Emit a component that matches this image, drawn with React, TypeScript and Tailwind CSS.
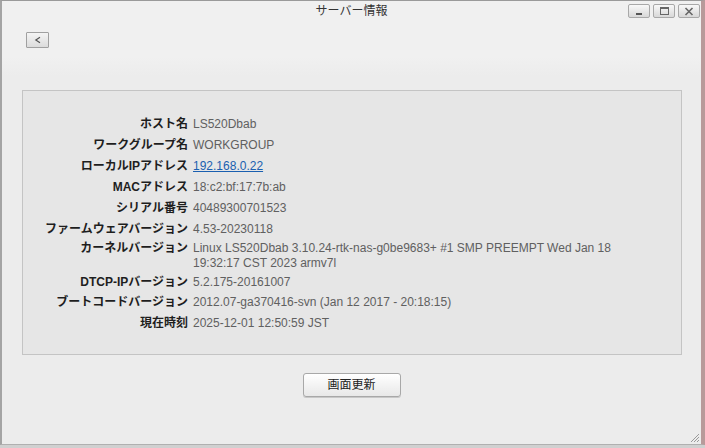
import React from "react";

const rows: { label: string; value: React.ReactNode; cls: string }[] = [
  { label: "ホスト名", value: "LS520Dbab", cls: "py-[3px]" },
  { label: "ワークグループ名", value: "WORKGROUP", cls: "py-[3px]" },
  {
    label: "ローカルIPアドレス",
    value: <span className="text-[#1a5fb0] underline">192.168.0.22</span>,
    cls: "py-[3px]",
  },
  { label: "MACアドレス", value: "18:c2:bf:17:7b:ab", cls: "py-[3px]" },
  { label: "シリアル番号", value: "40489300701523", cls: "py-[3px]" },
  { label: "ファームウェアバージョン", value: "4.53-20230118", cls: "py-[3px]" },
  {
    label: "カーネルバージョン",
    value: (
      <>
        Linux LS520Dbab 3.10.24-rtk-nas-g0be9683+ #1 SMP PREEMPT Wed Jan 18
        <br />
        19:32:17 CST 2023 armv7l
      </>
    ),
    cls: "pt-[1px] pb-[1px]",
  },
  { label: "DTCP-IPバージョン", value: "5.2.175-20161007", cls: "pt-[3px] pb-[2px]" },
  { label: "ブートコードバージョン", value: "2012.07-ga370416-svn (Jan 12 2017 - 20:18:15)", cls: "py-[3px]" },
  { label: "現在時刻", value: "2025-12-01 12:50:59 JST", cls: "py-[3px]" },
];

function WinBtn({ children }: { children: React.ReactNode }) {
  return (
    <div className="w-[22px] h-[14px] rounded-[2px] border border-[#a8a8a8] bg-gradient-to-b from-[#f8f8f8] to-[#d8d8d8] flex items-center justify-center">
      {children}
    </div>
  );
}

export default function App() {
  return (
    <div
      className="w-[705px] h-[448px] bg-[#d0d0d0] overflow-hidden"
      style={{ fontFamily: '"Liberation Sans", Arial, "Noto Sans CJK JP", sans-serif' }}
    >
      <div className="w-[705px] h-[445px] border-t border-t-[#9a9a9a] border-l-2 border-l-[#a4a4a4] border-r-[4px] border-r-[#b89a9a] border-b border-b-[#b0b0b0] bg-[#ececec] flex flex-col relative">
        {/* header */}
        <div className="h-[75px] bg-gradient-to-b from-[#f0f0f0] via-[#f0f0f0] via-75% to-[#ececec] relative shrink-0">
          <div className="h-[20px] flex items-center justify-center text-[12px] text-[#333]">
            サーバー情報
          </div>
          <div className="absolute right-[1px] top-[3px] flex gap-[3px]">
            <WinBtn>
              <div className="w-[6px] h-[2px] bg-[#555] mt-[6px]" />
            </WinBtn>
            <WinBtn>
              <div className="w-[9px] h-[8px] border border-[#666] border-t-2" />
            </WinBtn>
            <WinBtn>
              <svg width="10" height="9" viewBox="0 0 10 9">
                <path d="M1.5 1 L8.5 8 M8.5 1 L1.5 8" stroke="#666" strokeWidth="1.6" />
              </svg>
            </WinBtn>
          </div>
          <div className="ml-[24px] mt-[11px] w-[23px] h-[16px] border border-[#a0a0a0] bg-gradient-to-b from-[#f4f4f4] to-[#dcdcdc] flex items-center justify-center rounded-[1px]">
            <svg width="8" height="8" viewBox="0 0 8 8">
              <path d="M6 1.2 L1.8 4 L6 6.8" stroke="#555" strokeWidth="1.2" fill="none" />
            </svg>
          </div>
        </div>
        {/* body */}
        <div className="flex-1 pt-[14px] px-[20px]">
          <div className="w-[660px] h-[265px] border border-[#c4c4c4] bg-[#e6e6e6] pt-[23px]">
            {rows.map((r) => (
              <div key={r.label} className={"flex text-[12px] leading-[15px] " + r.cls}>
                <div className="w-[165px] shrink-0 text-right font-bold text-[#1e1e1e]">{r.label}</div>
                <div className="pl-[5px] text-[#606060]">{r.value}</div>
              </div>
            ))}
          </div>
          <div className="flex justify-center mt-[18px]">
            <button className="w-[98px] h-[24px] rounded-[3px] border border-[#a8a8a8] bg-gradient-to-b from-[#ffffff] to-[#e8e8e8] text-[12px] text-[#222] shadow-[0_1px_0_#c8c8c8]">
              画面更新
            </button>
          </div>
        </div>
        <svg className="absolute right-[1px] bottom-[1px]" width="12" height="12" viewBox="0 0 12 12">
          <path d="M11 3 L3 11 M11 6 L6 11 M11 9 L9 11" stroke="#9a9a9a" strokeWidth="1" />
        </svg>
      </div>
    </div>
  );
}
